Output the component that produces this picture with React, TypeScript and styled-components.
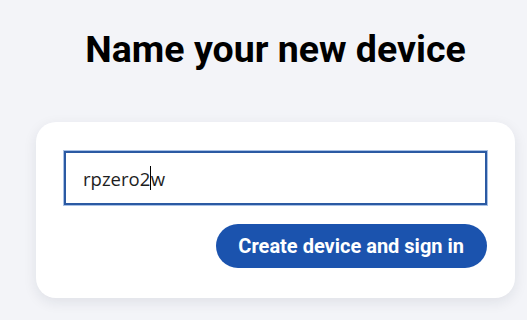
import React, { ReactElement } from 'react';
import styled, { createGlobalStyle } from 'styled-components';

const GlobalStyle = createGlobalStyle`
  html, body {
    margin: 0;
    padding: 0;
    background: #f3f4f8;
  }

  body {
    font-family: Roboto, "Liberation Sans", sans-serif;
    color: #000;
  }
`;

const Page = styled.div`
  min-height: 320px;
  padding: 27px 0 0 36px;
  box-sizing: border-box;
`;

const Main = styled.main`
  width: 479px;
  display: flex;
  flex-direction: column;
`;

const Title = styled.h1`
  margin: 0 0 51px;
  font-family: Roboto, "Liberation Sans", sans-serif;
  font-size: 37.5px;
  font-weight: 700;
  line-height: 44px;
  text-align: center;
  color: #000;
`;

const Card = styled.section`
  background: #fff;
  border-radius: 20px;
  padding: 29px 28px 30px;
  box-shadow: 0 4px 14px rgba(20, 30, 60, 0.09);
  display: flex;
  flex-direction: column;
  gap: 19px;
`;

const Field = styled.div`
  height: 54px;
  box-sizing: border-box;
  border: 2px solid #2b5aa3;
  box-shadow: 0 0 0 1px #a8c1e6;
  background: #fff;
  padding: 0 17px;
  display: flex;
  align-items: center;
  font-family: "Open Sans", "DejaVu Sans", sans-serif;
  font-size: 18.5px;
  color: #1e1e1e;
`;

const Caret = styled.span`
  display: inline-block;
  width: 1px;
  height: 24px;
  background: #000;
  margin: 0 0 0 -0.5px;
`;

const Actions = styled.div`
  display: flex;
  justify-content: flex-end;
`;

const Button = styled.button<{ $tone?: string }>`
  height: 44px;
  padding: 0 23px 0 22px;
  border: none;
  border-radius: 22px;
  background: ${(p) => p.$tone || '#1b53ae'};
  color: #fff;
  font-family: Roboto, "Liberation Sans", sans-serif;
  font-size: 20px;
  font-weight: 700;
  cursor: pointer;
`;

const App = (): ReactElement => {
  return (
    <>
      <GlobalStyle />
      <Page>
        <Main>
          <Title>Name your new device</Title>
          <Card>
            <Field role="textbox" aria-label="Device name">
              <span>rpzero2</span>
              <Caret />
              <span>w</span>
            </Field>
            <Actions>
              <Button>Create device and sign in</Button>
            </Actions>
          </Card>
        </Main>
      </Page>
    </>
  );
};

export default App;
